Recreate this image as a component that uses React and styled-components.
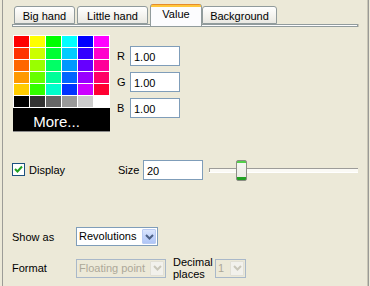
import React from 'react';
import styled, { createGlobalStyle } from 'styled-components';

const GlobalStyle = createGlobalStyle`
  html, body {
    margin: 0;
    padding: 0;
    background: #ece9d8;
  }
  body {
    font-family: "Liberation Sans", Arial, sans-serif;
    font-size: 11px;
    color: #000;
  }
`;

const tabs = [
  { label: 'Big hand', width: 61 },
  { label: 'Little hand', width: 71 },
  { label: 'Value', width: 52, active: true },
  { label: 'Background', width: 75 },
];

const palette = [
  '#ff0000', '#ffff00', '#00ff00', '#00ffff', '#0000ff', '#ff00ff',
  '#ff3300', '#ccff00', '#00ff33', '#00ccff', '#3300ff', '#ff00cc',
  '#ff6600', '#99ff00', '#00ff66', '#0099ff', '#6600ff', '#ff0099',
  '#ff9900', '#66ff00', '#00ff99', '#0066ff', '#9900ff', '#ff0066',
  '#ffcc00', '#33ff00', '#00ffcc', '#0033ff', '#cc00ff', '#ff0033',
  '#000000', '#333333', '#666666', '#999999', '#cccccc', '#ffffff',
];

function Chevron({ color }) {
  return (
    <svg width="9" height="6" viewBox="0 0 9 6">
      <path d="M1 1 L4.5 4.5 L8 1" fill="none" stroke={color} strokeWidth="2" />
    </svg>
  );
}

function Check() {
  return (
    <svg width="11" height="11" viewBox="0 0 11 11">
      <path d="M2 5 L4.5 7.5 L9 2.5" fill="none" stroke="#21a121" strokeWidth="2" />
    </svg>
  );
}

function App() {
  return (
    <>
      <GlobalStyle />
      <Frame>
        <TabStrip>
          <TabRow>
            {tabs.map((t) => (
              <Tab key={t.label} $active={t.active} $width={t.width}>
                {t.label}
              </Tab>
            ))}
          </TabRow>
          <TabBase />
        </TabStrip>

        <ColorRow>
          <Palette>
            <Swatches>
              {palette.map((c, i) => (
                <Swatch key={i} $color={c} />
              ))}
            </Swatches>
            <MoreButton>More...</MoreButton>
          </Palette>
          <Channels>
            {['R', 'G', 'B'].map((ch) => (
              <ChannelRow key={ch}>
                <ChannelLabel>{ch}</ChannelLabel>
                <TextField $width={50} readOnly value="1.00" />
              </ChannelRow>
            ))}
          </Channels>
        </ColorRow>

        <DisplayRow>
          <CheckGroup>
            <CheckBox>
              <Check />
            </CheckBox>
            <span>Display</span>
          </CheckGroup>
          <SizeLabel>Size</SizeLabel>
          <TextField $width={60} readOnly value="20" />
          <Slider>
            <Track />
            <Thumb style={{ left: 27 }} />
          </Slider>
        </DisplayRow>

        <FieldRow $top={46}>
          <FieldLabel>Show as</FieldLabel>
          <Combo $width={82}>
            <ComboText>Revolutions</ComboText>
            <ComboButton>
              <Chevron color="#4d6185" />
            </ComboButton>
          </Combo>
        </FieldRow>

        <FieldRow $top={10}>
          <FieldLabel>Format</FieldLabel>
          <Combo $width={90} $disabled>
            <ComboText $disabled>Floating point</ComboText>
            <ComboButton $disabled>
              <Chevron color="#c9c7ba" />
            </ComboButton>
          </Combo>
          <DecimalLabel>Decimal<br />places</DecimalLabel>
          <Combo $width={31} $disabled>
            <ComboText $disabled>1</ComboText>
            <ComboButton $disabled>
              <Chevron color="#c9c7ba" />
            </ComboButton>
          </Combo>
        </FieldRow>
      </Frame>
    </>
  );
}

const Frame = styled.div`
  box-sizing: border-box;
  width: 367px;
  height: 286px;
  margin-left: 2px;
  padding: 0 10px 0 9px;
  border-left: 1px solid #9c9c97;
  border-right: 1px solid #9a9a96;
  box-shadow: inset -1px 0 #c8c5b5;
  background: #ece9d8;
  overflow: hidden;
`;

const TabStrip = styled.div`
  padding-top: 4px;
`;

const TabRow = styled.div`
  display: flex;
  align-items: flex-end;
  height: 20px;
  padding-left: 2px;
`;

const Tab = styled.div`
  position: relative;
  z-index: ${(p) => (p.$active ? 1 : 0)};
  box-sizing: border-box;
  width: ${(p) => p.$width}px;
  height: ${(p) => (p.$active ? '22px' : '18px')};
  margin-bottom: ${(p) => (p.$active ? '-2px' : '0')};
  margin-right: ${(p) => (p.$active ? '0' : '2px')};
  padding: ${(p) => (p.$active ? '0 0 3px' : '1px 0 0')};
  display: flex;
  align-items: center;
  justify-content: center;
  border: 1px solid #919b9c;
  border-bottom: ${(p) => (p.$active ? 'none' : '1px solid #919b9c')};
  border-top: ${(p) => (p.$active ? 'none' : '1px solid #919b9c')};
  border-radius: 3px 3px 0 0;
  background: ${(p) =>
    p.$active
      ? 'linear-gradient(#e68b2c 0 1px, #ffc73c 1px 3px, #fcfcfe 3px)'
      : 'linear-gradient(#ffffff, #f3f2ed 60%, #e9e8e2)'};
  white-space: nowrap;
`;

const TabBase = styled.div`
  box-sizing: border-box;
  height: 3px;
  border: 1px solid #919b9c;
  background: #fcfcfe;
  box-shadow: 1px 0 #c8c5b5;
`;

const ColorRow = styled.div`
  display: flex;
  align-items: flex-start;
`;

const Palette = styled.div`
  margin: 8px 0 0 1px;
  width: 97px;
`;

const Swatches = styled.div`
  display: grid;
  grid-template-columns: repeat(6, 15px);
  grid-auto-rows: 11px;
  gap: 1px;
  padding: 1px;
  background: #fff;
`;

const Swatch = styled.div`
  background: ${(p) => p.$color};
`;

const MoreButton = styled.div`
  box-sizing: border-box;
  height: 24px;
  display: flex;
  align-items: flex-end;
  justify-content: center;
  padding: 0 10px 0 0;
  background: #000;
  color: #fff;
  font-size: 15px;
  line-height: 19px;
  border-bottom: 1px solid #8a8a8a;
`;

const Channels = styled.div`
  display: flex;
  flex-direction: column;
  gap: 6px;
  margin: 19px 0 0 7px;
`;

const ChannelRow = styled.div`
  display: flex;
  align-items: center;
`;

const ChannelLabel = styled.span`
  width: 13px;
`;

const TextField = styled.input`
  box-sizing: border-box;
  width: ${(p) => p.$width}px;
  height: 20px;
  margin: 0;
  padding: 1px 0 0 3px;
  border: 1px solid #7f9db9;
  background: #fff;
  font: inherit;
  color: #000;
  outline: none;
`;

const DisplayRow = styled.div`
  display: flex;
  align-items: flex-start;
  margin-top: 28px;
  height: 21px;
`;

const CheckGroup = styled.div`
  width: 106px;
  display: flex;
  align-items: center;
  gap: 4px;
  margin-top: 3px;
`;

const CheckBox = styled.span`
  box-sizing: border-box;
  width: 13px;
  height: 13px;
  border: 1px solid #1c5180;
  background: #fff;
  display: flex;
  align-items: center;
  justify-content: center;
`;

const SizeLabel = styled.span`
  width: 25px;
  line-height: 21px;
`;

const Slider = styled.div`
  position: relative;
  flex: 1;
  height: 21px;
  margin-left: 6px;
`;

const Track = styled.div`
  box-sizing: border-box;
  margin-top: 8px;
  height: 4px;
  border-top: 1px solid #9d9c99;
  border-left: 1px solid #9d9c99;
  background: #fbfaf5;
  box-shadow: 0 1px #fff;
`;

const Thumb = styled.div`
  position: absolute;
  top: 0;
  box-sizing: border-box;
  width: 11px;
  height: 21px;
  border: 1px solid #8c8d85;
  border-radius: 2px;
  background: linear-gradient(
    #52d04a 0 2px,
    #f6f6f2 2px,
    #ecebe5 calc(100% - 3px),
    #21a121 calc(100% - 3px)
  );
`;

const FieldRow = styled.div`
  display: flex;
  align-items: center;
  margin-top: ${(p) => p.$top}px;
`;

const FieldLabel = styled.span`
  width: 64px;
`;

const Combo = styled.div`
  box-sizing: border-box;
  width: ${(p) => p.$width}px;
  height: 19px;
  display: flex;
  align-items: stretch;
  padding: 1px;
  border: 1px solid ${(p) => (p.$disabled ? '#a9b8c9' : '#7f9db9')};
  background: ${(p) => (p.$disabled ? '#ece9d8' : '#fff')};
`;

const ComboText = styled.span`
  flex: 1;
  padding-left: 1px;
  line-height: 15px;
  overflow: hidden;
  white-space: nowrap;
  color: ${(p) => (p.$disabled ? '#aca899' : '#000')};
`;

const ComboButton = styled.span`
  box-sizing: border-box;
  width: 14px;
  display: flex;
  align-items: center;
  justify-content: center;
  border: 1px solid ${(p) => (p.$disabled ? '#e2e0d6' : '#b9cbf3')};
  border-radius: 1px;
  background: ${(p) =>
    p.$disabled
      ? '#f2f1ec'
      : 'linear-gradient(#dbe6fd, #c3d4fb 50%, #b0c6f6)'};
`;

const DecimalLabel = styled.span`
  width: 42px;
  margin-left: 7px;
  line-height: 12px;
`;

export default App;
